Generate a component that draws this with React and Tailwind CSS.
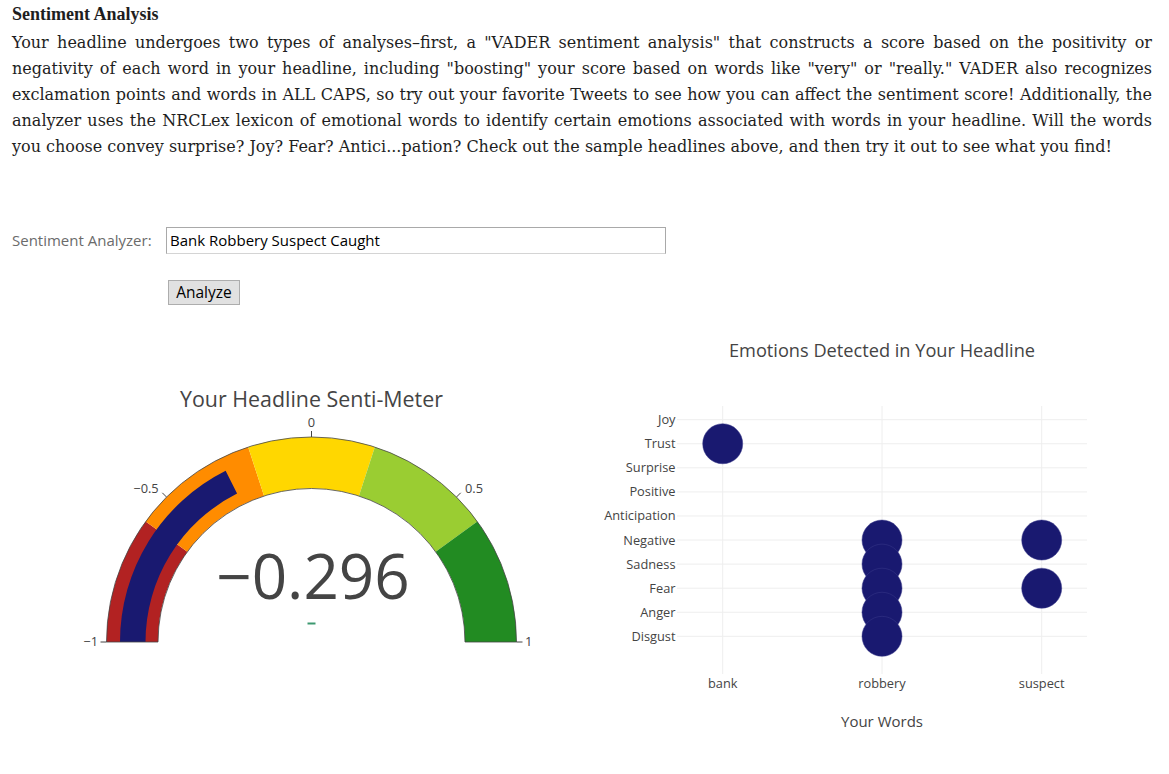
import React from 'react';

const lines = [
  'Your headline undergoes two types of analyses\u2013first, a "VADER sentiment analysis" that constructs a score based on the positivity or',
  'negativity of each word in your headline, including "boosting" your score based on words like "very" or "really." VADER also recognizes',
  'exclamation points and words in ALL CAPS, so try out your favorite Tweets to see how you can affect the sentiment score! Additionally, the',
  'analyzer uses the NRCLex lexicon of emotional words to identify certain emotions associated with words in your headline. Will the words',
];
const lastLine =
  'you choose convey surprise? Joy? Fear? Antici...pation? Check out the sample headlines above, and then try it out to see what you find!';

// gauge geometry
const CX = 311.5;
const CY = 313;
const pt = (v, r) => {
  const t = (Math.PI * (1 - v)) / 2;
  return [CX + r * Math.cos(t), CY - r * Math.sin(t)];
};
const sector = (v1, v2, r0, r1) => {
  const a = pt(v1, r1);
  const b = pt(v2, r1);
  const c = pt(v2, r0);
  const d = pt(v1, r0);
  return `M${a[0]} ${a[1]} A${r1} ${r1} 0 0 1 ${b[0]} ${b[1]} L${c[0]} ${c[1]} A${r0} ${r0} 0 0 0 ${d[0]} ${d[1]} Z`;
};

const steps = [
  [-1, -0.6, '#b22222'],
  [-0.6, -0.2, '#ff8c00'],
  [-0.2, 0.2, '#ffd700'],
  [0.2, 0.6, '#9acd32'],
  [0.6, 1, '#228b22'],
];

const plotFont = { fontFamily: '"Open Sans", Verdana, Arial, sans-serif' };

function Gauge() {
  const ticks = [-1, -0.5, 0, 0.5, 1];
  return (
    <svg width="590" height="340" className="block shrink-0" style={plotFont}>
      <text x="311.5" y="78" textAnchor="middle" fontSize="21.4" fill="#444">Your Headline Senti-Meter</text>
      {steps.map(([a, b, c]) => (
        <path key={a} d={sector(a, b, 153.5, 205)} fill={c} />
      ))}
      <path d={sector(-1, -0.296, 166, 191.5)} fill="#191970" />
      <path d={sector(-1, 1, 153.5, 205)} fill="none" stroke="#444" strokeWidth="0.8" />
      {ticks.map((v) => {
        const a = pt(v, 205);
        const b = pt(v, 211);
        return <line key={v} x1={a[0]} y1={a[1]} x2={b[0]} y2={b[1]} stroke="#444" strokeWidth="1" />;
      })}
      <text x="311.5" y="98" textAnchor="middle" fontSize="12.8" fill="#444">0</text>
      <text x="146" y="164" textAnchor="middle" fontSize="12.8" fill="#444">{'\u22120.5'}</text>
      <text x="474" y="164" textAnchor="middle" fontSize="12.8" fill="#444">0.5</text>
      <text x="98" y="317" textAnchor="end" fontSize="12.8" fill="#444">{'\u22121'}</text>
      <text x="525" y="317" textAnchor="start" fontSize="12.8" fill="#444">1</text>
      <text x="313" y="270" textAnchor="middle" fontSize="62" fill="#444">{'\u22120.296'}</text>
      <line x1="307.5" y1="294.5" x2="315.5" y2="294.5" stroke="#3d9970" strokeWidth="2" />
    </svg>
  );
}

const emotions = ['Joy', 'Trust', 'Surprise', 'Positive', 'Anticipation', 'Negative', 'Sadness', 'Fear', 'Anger', 'Disgust'];
const words = [
  ['bank', 132.7],
  ['robbery', 292],
  ['suspect', 451.7],
];
const points = [
  [0, 'Trust'],
  [1, 'Negative'],
  [1, 'Sadness'],
  [1, 'Fear'],
  [1, 'Anger'],
  [1, 'Disgust'],
  [2, 'Negative'],
  [2, 'Fear'],
];
const ey = (name) => 90.7 + emotions.indexOf(name) * 24.07;

function Bubbles() {
  return (
    <svg width="579" height="420" className="block shrink-0" style={plotFont}>
      <text x="292" y="28" textAnchor="middle" fontSize="18.2" fill="#444">Emotions Detected in Your Headline</text>
      {words.map(([w, x]) => (
        <line key={w} x1={x} y1="77" x2={x} y2="345" stroke="#eee" strokeWidth="1" />
      ))}
      {emotions.map((e) => (
        <g key={e}>
          <line x1="87" y1={ey(e)} x2="497" y2={ey(e)} stroke="#eee" strokeWidth="1" />
          <text x="85.5" y={ey(e) + 4.5} textAnchor="end" fontSize="12.8" fill="#444">{e}</text>
        </g>
      ))}
      {points.map(([i, e], k) => (
        <circle key={k} cx={words[i][1]} cy={ey(e)} r="20" fill="#191970" stroke="#3a3a8a" strokeWidth="0.5" />
      ))}
      {words.map(([w, x]) => (
        <text key={w} x={x} y="358.5" textAnchor="middle" fontSize="12.8" fill="#444">{w}</text>
      ))}
      <text x="292" y="398" textAnchor="middle" fontSize="15" fill="#444">Your Words</text>
    </svg>
  );
}

export default function App() {
  return (
    <div className="min-h-screen bg-white">
      <div className="px-[12px] pt-[3px] text-[#1e1e1e]">
        <h3 className="font-bold text-[18px] leading-[22px]" style={{ fontFamily: '"Liberation Serif", serif' }}>
          Sentiment Analysis
        </h3>
        <div className="text-[16px] leading-[26px] mt-[5px] w-[1140px]" style={{ fontFamily: '"DejaVu Serif", "Liberation Serif", serif' }}>
          {lines.map((l) => (
            <div key={l} className="text-justify [text-align-last:justify] whitespace-nowrap">{l}</div>
          ))}
          <div className="whitespace-nowrap">{lastLine}</div>
        </div>
      </div>

      <div className="mt-[67px] px-[12px]" style={{ fontFamily: '"Open Sans", "Noto Sans", sans-serif' }}>
        <div className="flex items-center">
          <label className="w-[154px] text-[15px] text-[#6b6b6b]">Sentiment Analyzer:</label>
          <div className="w-[500px] h-[27px] border border-[#a9a9a9] border-b-[#d4d4d4] flex items-center px-[3px] text-[15px] text-black">
            Bank Robbery Suspect Caught
          </div>
        </div>
        <div className="pl-[156px] mt-[26px]">
          <button className="h-[25px] w-[72px] bg-[#e1e1e1] border border-[#adadad] text-[15.5px] text-black leading-none">Analyze</button>
        </div>
      </div>

      <div className="flex mt-[24px]">
        <Gauge />
        <Bubbles />
      </div>
    </div>
  );
}
